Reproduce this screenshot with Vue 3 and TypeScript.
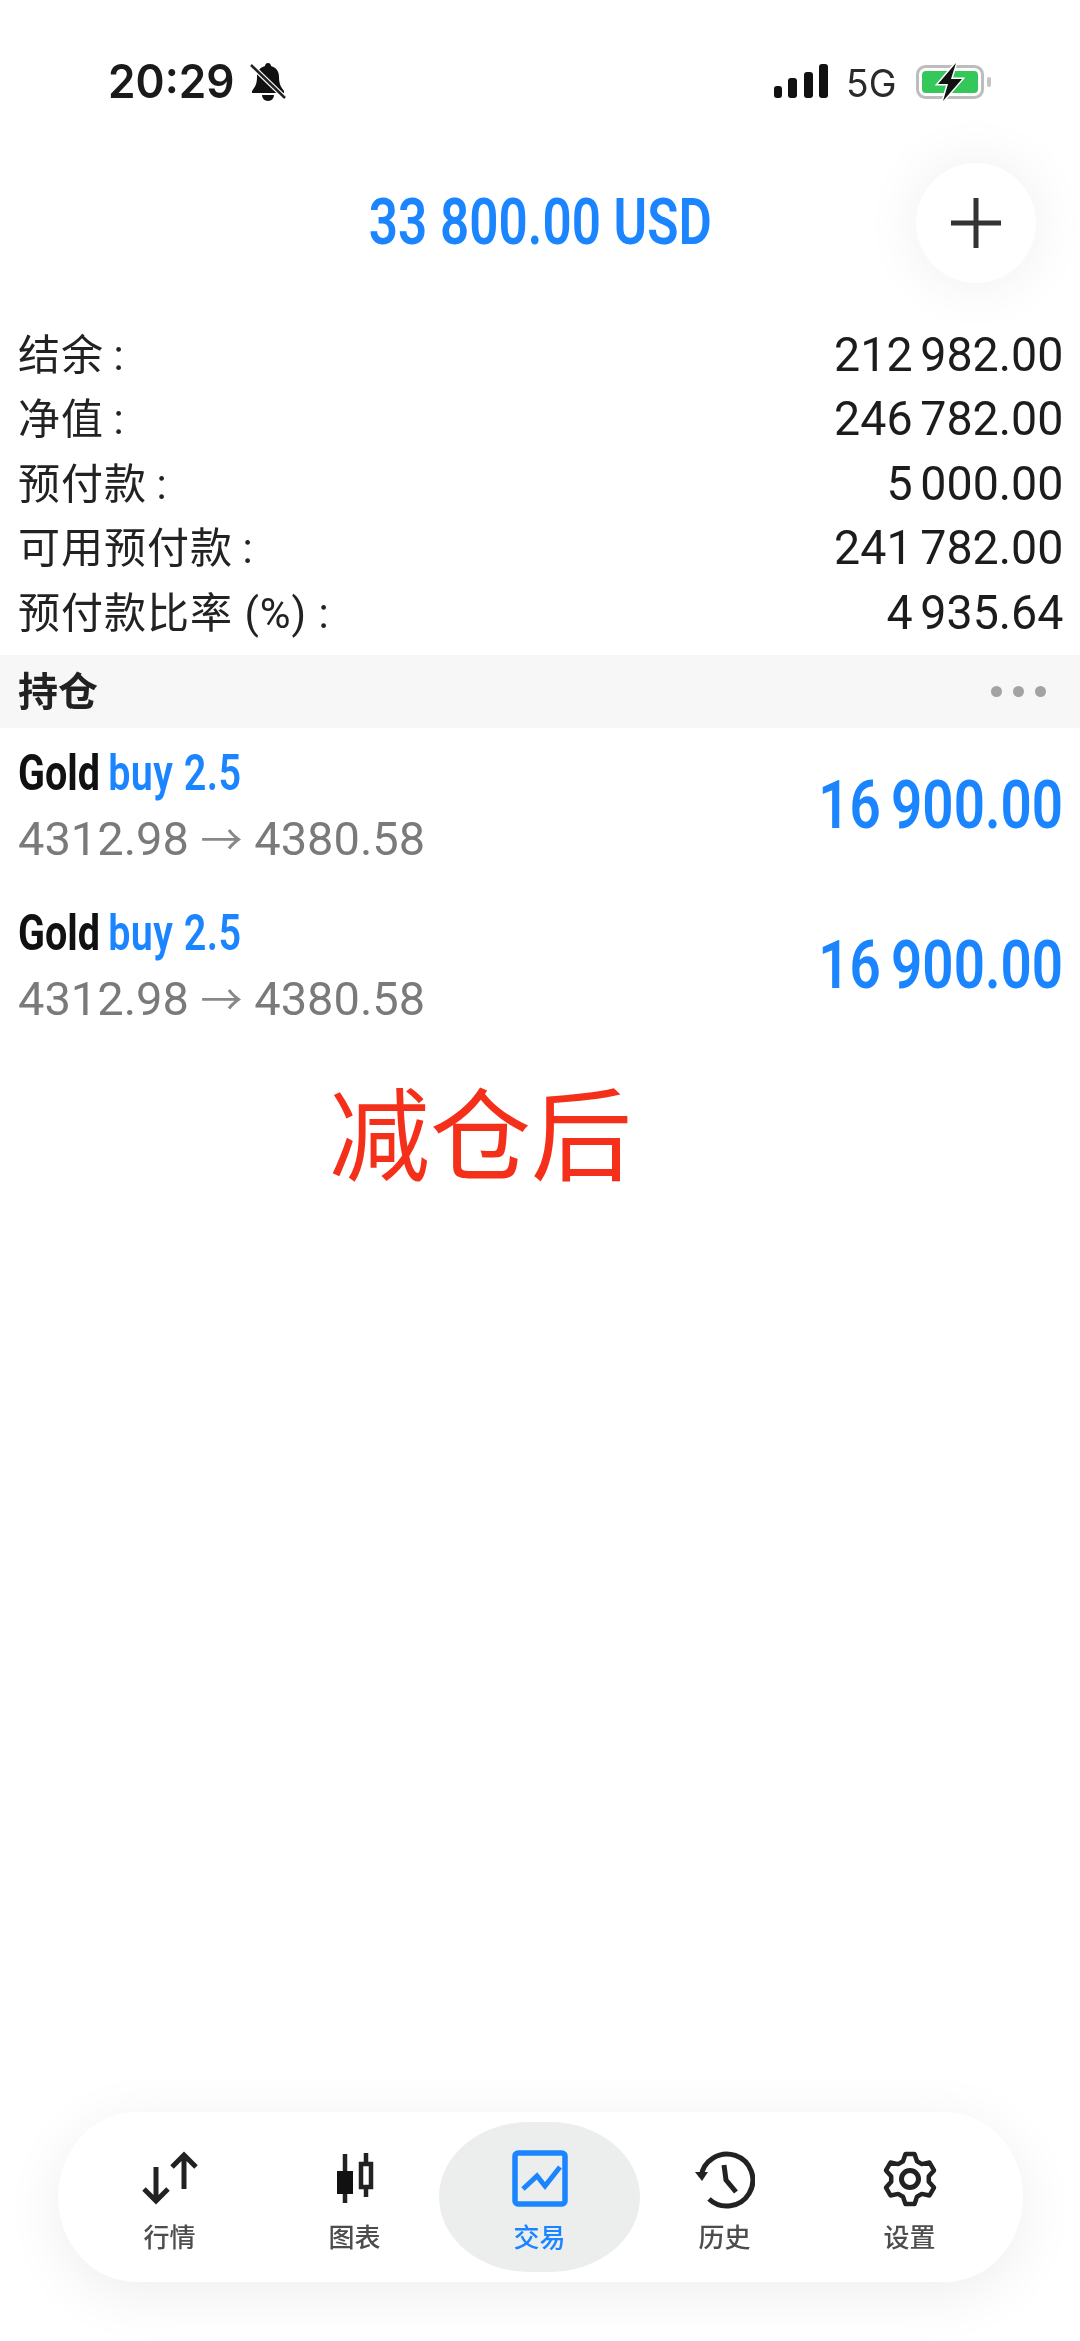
<script setup lang="ts">
interface Row { label: string; value: string }
interface Position { symbol: string; side: string; from: string; to: string; profit: string }
interface Tab { key: string; label: string; active?: boolean }

const rows: Row[] = [
  { label: '结余\u2009:', value: '212 982.00' },
  { label: '净值\u2009:', value: '246 782.00' },
  { label: '预付款\u2009:', value: '5 000.00' },
  { label: '可用预付款\u2009:', value: '241 782.00' },
  { label: '预付款比率 (%) :', value: '4 935.64' },
]
const positions: Position[] = [
  { symbol: 'Gold', side: 'buy 2.5', from: '4312.98', to: '4380.58', profit: '16 900.00' },
  { symbol: 'Gold', side: 'buy 2.5', from: '4312.98', to: '4380.58', profit: '16 900.00' },
]
const tabs: Tab[] = [
  { key: 'quotes', label: '行情' },
  { key: 'charts', label: '图表' },
  { key: 'trade', label: '交易', active: true },
  { key: 'history', label: '历史' },
  { key: 'settings', label: '设置' },
]

function gearPath(cx: number, cy: number): string {
  const pts: string[] = []
  for (let i = 0; i < 6; i++) {
    const a = (-90 + i * 60) * Math.PI / 180
    const offsets: [number, number][] = [[-30, 19], [-12, 25.5], [12, 25.5], [30, 19]]
    for (const [d, r] of offsets) {
      const t = a + d * Math.PI / 180 * (r > 20 ? 0.85 : 0.72)
      pts.push(`${(cx + r * Math.cos(t)).toFixed(1)} ${(cy + r * Math.sin(t)).toFixed(1)}`)
    }
  }
  return 'M' + pts.join('L') + 'Z'
}
const gear = gearPath(30, 30)
</script>

<template>
  <div class="page">
    <div class="status">
      <span class="clock">20:29</span>
      <svg class="bell" width="38" height="40" viewBox="0 0 38 40">
        <path d="M19 1c2 0 3 1.500 3 3 5 1.500 8 5 8 11 0 7 2 10 5 14v2H3v-2c3-4 5-7 5-14 0-6 3-9.500 8-11 0-1.500 1-3 3-3z" fill="#111" />
        <path d="M13 33h12c0 3-2.500 6-6 6s-6-3-6-6z" fill="#111" />
        <path d="M2 3l34 33" stroke="#fff" stroke-width="5" />
        <path d="M2 3l34 33" stroke="#222" stroke-width="2.500" />
      </svg>
      <span class="status-gap"></span>
      <svg class="signal" width="54" height="36" viewBox="0 0 54 36">
        <rect x="0" y="22" width="8" height="12" rx="3" fill="#111" />
        <rect x="14" y="14" width="9" height="20" rx="3" fill="#111" />
        <rect x="30" y="8" width="9" height="26" rx="3" fill="#111" />
        <rect x="45" y="0" width="9" height="34" rx="3" fill="#111" />
      </svg>
      <span class="net">5G</span>
      <svg class="battery" width="78" height="38" viewBox="0 0 78 38">
        <rect x="1.500" y="3.500" width="65" height="31" rx="8" fill="none" stroke="#bdbdbd" stroke-width="3" />
        <rect x="6" y="8" width="56" height="22" rx="4" fill="#34c759" />
        <rect x="71" y="14" width="4" height="10" rx="2" fill="#c4c4c4" />
        <path d="M40 0L22 21h10l-5 17 19-22H35l5-16z" fill="#111" stroke="#fff" stroke-width="3" paint-order="stroke" />
      </svg>
    </div>

    <header class="head">
      <span class="total">33 800.00 USD</span>
      <button class="add" type="button" aria-label="add">
        <svg width="52" height="52" viewBox="0 0 52 52">
          <path d="M26 1v50M1 26h50" stroke="#333" stroke-width="5" />
        </svg>
      </button>
    </header>

    <section class="summary">
      <div v-for="r in rows" :key="r.label" class="row">
        <span class="label">{{ r.label }}</span>
        <span class="value">{{ r.value }}</span>
      </div>
    </section>

    <div class="band">
      <span class="band-title">持仓</span>
      <span class="dots"><i></i><i></i><i></i></span>
    </div>

    <section class="positions">
      <div v-for="(p, i) in positions" :key="i" class="pos">
        <div class="pos-left">
          <div class="pos-title"><b>{{ p.symbol }}</b> <span>{{ p.side }}</span></div>
          <div class="pos-price">{{ p.from }} <em>→</em> {{ p.to }}</div>
        </div>
        <div class="pos-profit">{{ p.profit }}</div>
      </div>
    </section>

    <div class="note">减仓后</div>

    <nav class="nav">
      <div v-for="t in tabs" :key="t.key" class="tab" :class="{ active: t.active }">
        <svg v-if="t.key === 'quotes'" width="60" height="60" viewBox="0 0 60 60" fill="none" stroke="#222" stroke-width="5">
          <path d="M16 18v34M4 40l12 12 12-12" />
          <path d="M44 40V6M32 18L44 6l12 12" />
        </svg>
        <svg v-else-if="t.key === 'charts'" width="60" height="60" viewBox="0 0 60 60" fill="none" stroke="#222" stroke-width="4.500">
          <path d="M20 5v49" />
          <rect x="12" y="22" width="16" height="23" fill="#111" stroke="none" />
          <path d="M41 4v11M41 38v10" />
          <rect x="36" y="15" width="10" height="23" />
        </svg>
        <svg v-else-if="t.key === 'trade'" width="60" height="60" viewBox="0 0 60 60" fill="none" stroke="#1a85ff">
          <rect x="5" y="4" width="50" height="51" rx="3" stroke-width="5.500" />
          <path d="M13 40l14-13 8 10 15-19" stroke-width="5" />
        </svg>
        <svg v-else-if="t.key === 'history'" width="60" height="60" viewBox="0 0 60 60" fill="none" stroke="#222" stroke-width="5">
          <path d="M6 28A26 26 0 1 1 14 50" />
          <path d="M0 23h13l-6 9z" fill="#222" stroke="none" />
          <path d="M29 16l2 15 10 12" />
        </svg>
        <svg v-else width="60" height="60" viewBox="0 0 60 60" fill="none" stroke="#222">
          <path :d="gear" stroke-width="4.500" stroke-linejoin="round" />
          <circle cx="30" cy="30" r="8.500" stroke-width="5" />
        </svg>
        <span class="tab-label">{{ t.label }}</span>
      </div>
    </nav>
  </div>
</template>

<style scoped>
.page {
  min-height: 2341px;
  box-sizing: border-box;
  display: flex;
  flex-direction: column;
  background: #fff;
  color: #222;
  font-family: Roboto, "Noto Sans CJK SC", sans-serif;
  padding-bottom: 59px;
  filter: blur(0.7px);
  overflow: hidden;
}
.status {
  height: 130px;
  box-sizing: border-box;
  padding: 62px 86px 0 108px;
  display: flex;
  align-items: flex-start;
}
.clock {
  font-family: Inter, sans-serif;
  font-size: 46px;
  line-height: 38px;
  font-weight: 600;
  color: #1a1a1a;
  width: 127px;
  display: inline-block;
  transform: scaleX(.96);
  transform-origin: left;
}
.bell { margin-left: 14px; }
.status-gap { flex: 1; }
.signal { margin-top: 2px; }
.net {
  font-family: Inter, sans-serif;
  font-size: 38px;
  line-height: 36px;
  margin: 3px 0 0 18px;
  color: #2a2a2a;
  display: inline-block;
  width: 51px;
  transform: scaleX(.98);
  transform-origin: left;
}
.battery { margin: 1px 0 0 19px; }
.head {
  position: relative;
  height: 184px;
  display: flex;
  align-items: center;
  justify-content: center;
}
.total {
  font-size: 64px;
  font-weight: 600;
  color: #1a85ff;
  display: inline-block;
  transform: scaleX(.8);
}
.add {
  position: absolute;
  left: 916px;
  top: 33px;
  width: 120px;
  height: 120px;
  border: 0;
  padding: 0;
  border-radius: 50%;
  background: #fff;
  box-shadow: 0 0 60px rgba(0, 0, 0, .07);
  display: flex;
  align-items: center;
  justify-content: center;
}
.summary {
  padding: 8px 17px 0 18px;
  height: 341px;
  box-sizing: border-box;
}
.row {
  height: 64.500px;
  display: flex;
  justify-content: space-between;
  align-items: center;
}
.label {
  font-size: 42px;
  letter-spacing: 1px;
  color: #222;
  margin-top: -6px;
}
.value {
  font-size: 48px;
  word-spacing: -4px;
  color: #1c1c1c;
  display: inline-block;
  transform: scaleX(.97);
  transform-origin: right;
}
.band {
  height: 73px;
  background: #f7f7f7;
  padding: 0 34px 0 18px;
  display: flex;
  justify-content: space-between;
  align-items: center;
}
.band-title {
  font-size: 40px;
  font-weight: 700;
  color: #222;
  margin-top: -5px;
}
.dots { display: flex; gap: 11px; }
.dots i {
  width: 11px;
  height: 11px;
  border-radius: 50%;
  background: #a3a3a3;
  display: block;
}
.pos {
  height: 159.500px;
  display: flex;
  justify-content: space-between;
  align-items: center;
  padding: 0 17px 0 18px;
}
.pos-title {
  font-size: 50px;
  line-height: 60px;
  font-weight: 600;
  color: #1a85ff;
  transform: scaleX(.79);
  transform-origin: left;
  margin-top: -4px;
}
.pos-title b { color: #111; font-weight: 700; }
.pos-title span { letter-spacing: .6px; margin-left: -2px; }
.pos-price {
  font-size: 47px;
  line-height: 54px;
  margin-top: 9px;
  color: #7a7a7a;
}
.pos-price em { font-style: normal; font-size: 42px; color: #888; }
.pos-profit {
  font-size: 66px;
  font-weight: 600;
  word-spacing: -4px;
  color: #1a85ff;
  transform: scaleX(.83);
  transform-origin: right;
  margin-top: -4px;
}
.note {
  margin-top: 22px;
  padding-left: 329px;
  font-family: "Noto Sans CJK SC", sans-serif;
  font-size: 101px;
  line-height: 120px;
  color: #f5301a;
}
.nav {
  margin: auto 57px 0 58px;
  height: 170px;
  padding: 0 21px 0 19px;
  border-radius: 78px / 85px;
  background: #fff;
  box-shadow: 0 12px 60px rgba(0, 0, 0, .07);
  display: grid;
  grid-template-columns: repeat(5, 1fr);
  align-items: center;
}
.tab {
  height: 150px;
  margin: 0 -8px;
  border-radius: 90px / 75px;
  display: flex;
  flex-direction: column;
  align-items: center;
  box-sizing: border-box;
  padding-top: 27px;
}
.tab.active { background: #eceeee; }
.tab-label {
  font-family: "Noto Sans CJK SC", sans-serif;
  font-size: 26px;
  font-weight: 500;
  line-height: 32px;
  margin-top: 11px;
  color: #4d4d4d;
}
.active .tab-label { color: #1a85ff; }
</style>
